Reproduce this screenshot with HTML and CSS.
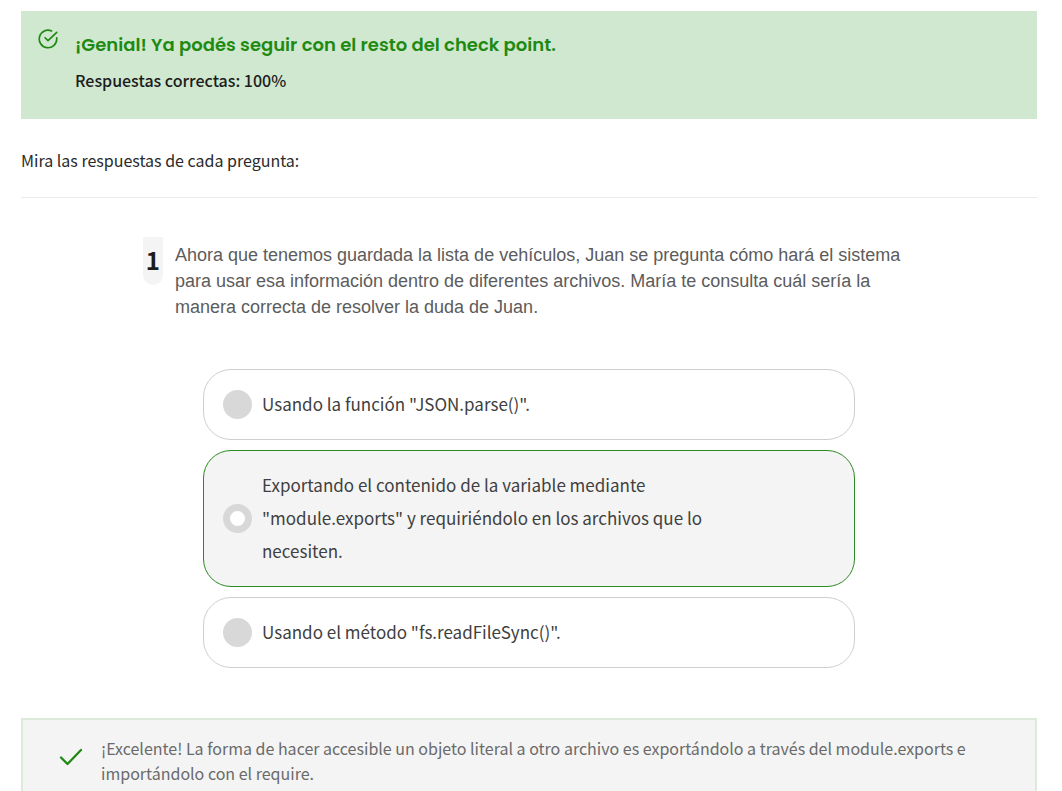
FILE: index.html
```html
<!DOCTYPE html>
<html lang="es">
<head>
<meta charset="utf-8">
<meta name="viewport" content="width=device-width, initial-scale=1">
<title>Resultado del check point</title>
<link rel="stylesheet" href="styles.css">
</head>
<body>
<main class="page">
  <section class="banner">
    <svg class="banner-icon" viewBox="0 0 24 24" fill="none" stroke="currentColor" stroke-width="2" stroke-linecap="round" stroke-linejoin="round" aria-hidden="true">
      <path d="M22.5 10.5V12a10.5 10.5 0 1 1-6.2-9.6"/>
      <path d="M22.5 4 12 14l-3.5-3.5"/>
    </svg>
    <div class="banner-body">
      <h1 class="banner-title">¡Genial! Ya podés seguir con el resto del check point.</h1>
      <p class="banner-score">Respuestas correctas: 100%</p>
    </div>
  </section>

  <p class="intro">Mira las respuestas de cada pregunta:</p>

  <section class="question">
    <div class="question-head">
      <span class="question-number">1</span>
      <p class="question-text" id="question-1">Ahora que tenemos guardada la lista de vehículos, Juan se pregunta cómo hará el sistema para usar esa información dentro de diferentes archivos. María te consulta cuál sería la manera correcta de resolver la duda de Juan.</p>
    </div>
    <div class="options" role="radiogroup" aria-labelledby="question-1">
      <label class="option">
        <input class="option-radio" type="radio" name="q1">
        <span class="option-text">Usando la función "JSON.parse()".</span>
      </label>
      <label class="option option-correct">
        <input class="option-radio" type="radio" name="q1" checked>
        <span class="option-text">Exportando el contenido de la variable mediante "module.exports" y requiriéndolo en los archivos que lo necesiten.</span>
      </label>
      <label class="option">
        <input class="option-radio" type="radio" name="q1">
        <span class="option-text">Usando el método "fs.readFileSync()".</span>
      </label>
    </div>
  </section>

  <section class="feedback">
    <svg class="feedback-icon" viewBox="0 0 24 24" fill="none" stroke="currentColor" stroke-width="2.3" stroke-linecap="round" stroke-linejoin="round" aria-hidden="true">
      <path d="M2 12.5 8.5 19 22 5"/>
    </svg>
    <p class="feedback-text">¡Excelente! La forma de hacer accesible un objeto literal a otro archivo es exportándolo a través del module.exports e importándolo con el require.</p>
  </section>
</main>
</body>
</html>
```
FILE: styles.css
```css
* {
  box-sizing: border-box;
}

body {
  margin: 0;
  background: #fff;
  color: #1c1c1c;
  font-family: "Noto Sans CJK SC", "Noto Sans", sans-serif;
  font-size: 16px;
  font-weight: 400;
}

h1,
p {
  margin: 0;
}

.page {
  padding: 11px 25px 0 21px;
}

.banner {
  display: flex;
  gap: 16px;
  padding: 18px 16px 24px;
  background: #cfe8cf;
}

.banner-icon {
  flex: none;
  width: 22px;
  height: 20px;
  color: #1f8a12;
}

.banner-title {
  color: #1f8a12;
  font-family: Poppins, Inter, sans-serif;
  font-size: 18px;
  font-weight: 600;
  line-height: 32px;
}

.banner-score {
  padding-top: 4px;
  font-weight: 500;
  line-height: 30px;
}

.intro {
  padding: 29px 0 25px;
  border-bottom: 1px solid #ebebeb;
  color: #2a2a2a;
  line-height: 24px;
}

.question {
  padding: 39px 0 50px;
}

.question-head {
  display: flex;
  align-items: flex-start;
  gap: 12px;
  width: 76%;
  margin: 0 auto;
}

.question-number {
  flex: none;
  width: 20px;
  padding-bottom: 2px;
  border-radius: 0 0 10px 10px;
  background: #f4f4f4;
  font-size: 24px;
  font-weight: 700;
  line-height: 46px;
  text-align: center;
}

.question-text {
  max-width: 740px;
  padding-top: 5px;
  color: #5c5c5c;
  font-family: "Liberation Sans", Arial, sans-serif;
  font-size: 18px;
  line-height: 26px;
}

.options {
  display: flex;
  flex-direction: column;
  gap: 10px;
  max-width: 652px;
  margin: 49px auto 0;
}

.option {
  display: flex;
  align-items: center;
  gap: 10px;
  padding: 17px 19px;
  border: 1px solid #cfcfcf;
  border-radius: 28px;
  background: #fff;
}

.option-correct {
  border-color: #2c8a22;
  background: #f4f4f4;
}

.option-radio {
  appearance: none;
  flex: none;
  width: 29px;
  height: 29px;
  margin: 0;
  border-radius: 50%;
  background: #d8d8d8;
}

.option-radio:checked {
  border: 7px solid #d8d8d8;
  background: #fff;
}

.option-text {
  max-width: 480px;
  padding-bottom: 2px;
  color: #404040;
  font-size: 17px;
  line-height: 33px;
}

.feedback {
  display: flex;
  gap: 18px;
  padding: 16px 36px;
  border: 2px solid #dbead9;
  background: #f4f4f4;
}

.feedback-icon {
  flex: none;
  width: 24px;
  height: 42px;
  color: #1f8a12;
}

.feedback-text {
  color: #6a6a6a;
  font-size: 16px;
  line-height: 25px;
}
```
